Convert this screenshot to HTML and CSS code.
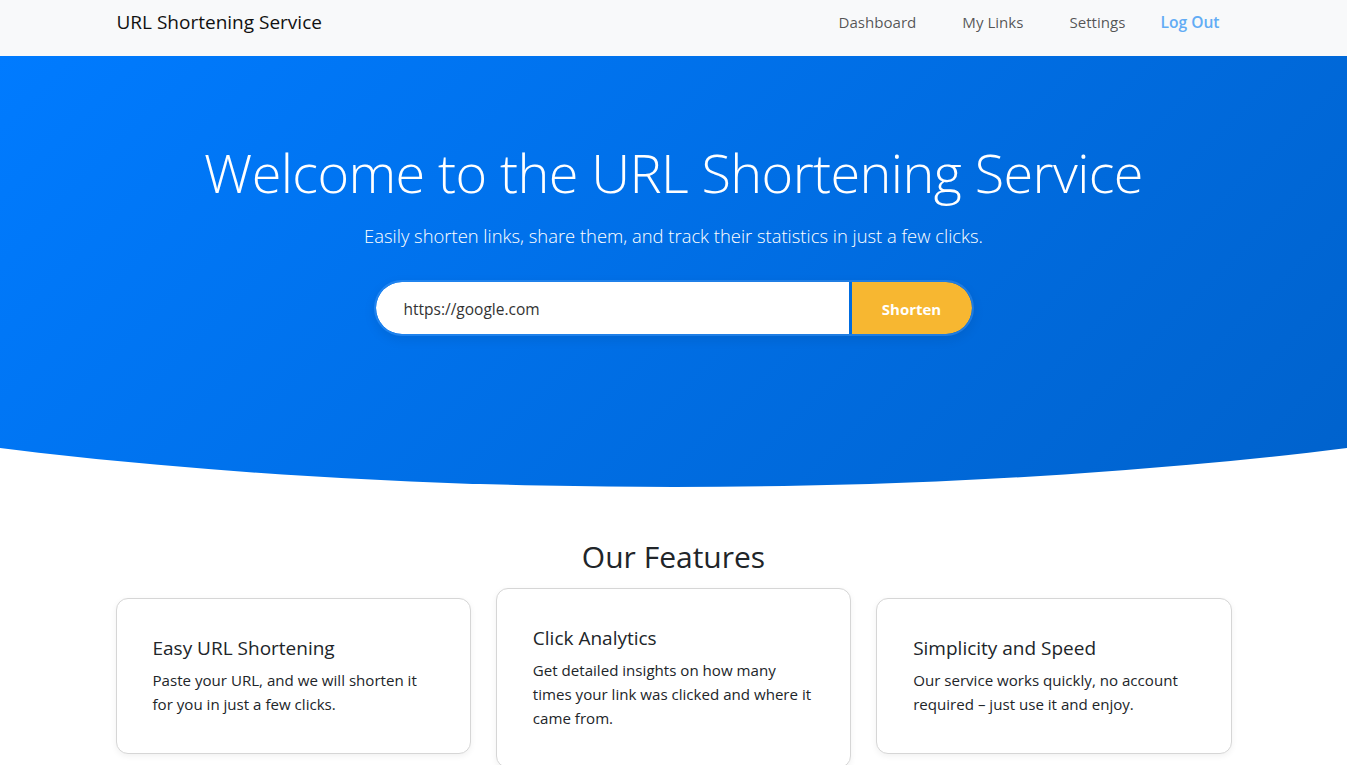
FILE: index.html
```html
<!DOCTYPE html>
<html lang="en">
<head>
<meta charset="utf-8">
<title>URL Shortening Service</title>
<link rel="stylesheet" href="styles.css">
</head>
<body>
<nav class="navbar">
  <div class="container nav-inner">
    <a class="brand" href="#">URL Shortening Service</a>
    <ul class="nav-links">
      <li><a class="nav-link" href="#">Dashboard</a></li>
      <li><a class="nav-link" href="#">My Links</a></li>
      <li><a class="nav-link" href="#">Settings</a></li>
      <li><a class="nav-link logout" href="#">Log Out</a></li>
    </ul>
  </div>
</nav>

<section class="hero">
  <h1 class="hero-title">Welcome to the URL Shortening Service</h1>
  <p class="hero-lead">Easily shorten links, share them, and track their statistics in just a few clicks.</p>
  <form class="shorten-form">
    <input class="url-input" type="text" value="https://google.com">
    <button class="shorten-btn" type="button">Shorten</button>
  </form>
</section>

<section class="features">
  <div class="container">
    <h2 class="features-title">Our Features</h2>
    <div class="feature-grid">
      <div class="card">
        <h3 class="card-title">Easy URL Shortening</h3>
        <p class="card-text">Paste your URL, and we will shorten it for you in just a few clicks.</p>
      </div>
      <div class="card card-raised">
        <h3 class="card-title">Click Analytics</h3>
        <p class="card-text">Get detailed insights on how many times your link was clicked and where it came from.</p>
      </div>
      <div class="card">
        <h3 class="card-title">Simplicity and Speed</h3>
        <p class="card-text">Our service works quickly, no account required – just use it and enjoy.</p>
      </div>
    </div>
  </div>
</section>
</body>
</html>
```
FILE: styles.css
```css
* { box-sizing: border-box; }

html, body {
  margin: 0;
  padding: 0;
}

body {
  font-family: "Open Sans", "Noto Sans", "Liberation Sans", sans-serif;
  color: #212529;
  background: #fff;
  overflow: hidden;
}

.container {
  width: 1116px;
  margin: 0 auto;
}

/* Navbar */
.navbar {
  background: #f8f9fa;
  height: 56px;
}

.nav-inner {
  height: 100%;
  display: flex;
  align-items: flex-start;
  justify-content: space-between;
  padding-top: 8px;
}

.brand {
  font-size: 19px;
  line-height: 28px;
  color: #111;
  text-decoration: none;
  padding-left: 1px;
}

.nav-links {
  list-style: none;
  margin: 0;
  padding: 0 12px 0 0;
  display: flex;
  align-items: center;
  height: 28px;
}

.nav-link {
  display: block;
  font-size: 15.1px;
  line-height: 28px;
  color: rgba(0, 0, 0, 0.68);
  text-decoration: none;
  margin-left: 46px;
}

.nav-links li:first-child .nav-link { margin-left: 0; }

.nav-link.logout {
  color: #62acf5;
  font-size: 15.6px;
  font-weight: 600;
  margin-left: 35px;
}

/* Hero */
.hero {
  background: linear-gradient(135deg, #007bff 0%, #0062cc 100%);
  clip-path: ellipse(100% 67.5% at 50% 32.5%);
  color: #fff;
  text-align: center;
  padding: 81px 0 151px;
}

.hero-title {
  margin: 0;
  font-size: 54px;
  font-weight: 300;
  line-height: 70px;
  letter-spacing: -0.6px;
}

.hero-lead {
  margin: 14px 0 0;
  font-size: 18.4px;
  font-weight: 300;
  line-height: 30px;
}

.shorten-form {
  width: 600px;
  height: 56px;
  margin: 29px auto 0;
  display: flex;
  gap: 3px;
  border-radius: 28px;
  border: 2px solid rgba(255, 255, 255, 0.12);
  box-shadow: 0 4px 12px rgba(0, 0, 0, 0.08);
  overflow: hidden;
}

.url-input {
  flex: 1;
  border: none;
  outline: none;
  background: #fff;
  border-radius: 27px 0 0 27px;
  padding: 2px 28px 0;
  font-family: inherit;
  font-size: 15.5px;
  color: #333;
}

.shorten-btn {
  width: 120px;
  border: none;
  background: #f7b731;
  color: #fff;
  font-family: inherit;
  font-size: 15px;
  font-weight: 700;
  border-radius: 0 27px 27px 0;
  padding-top: 2px;
  cursor: pointer;
}

/* Features */
.features {
  padding-top: 51px;
}

.features-title {
  margin: 0;
  text-align: center;
  font-size: 30px;
  font-weight: 400;
  line-height: 38px;
}

.feature-grid {
  margin-top: 22px;
  display: grid;
  grid-template-columns: repeat(3, 1fr);
  gap: 25px;
  align-items: start;
}

.card {
  background: #fff;
  border: 1px solid #d6d6d6;
  border-radius: 12px;
  padding: 36px 36px 37px;
  box-shadow: 0 2px 6px rgba(0, 0, 0, 0.06);
}

.card-raised {
  transform: translateY(-10px);
}

.card-title {
  margin: 0;
  font-size: 19px;
  font-weight: 400;
  line-height: 24px;
  padding-top: 1px;
}

.card-text {
  margin: 8px 0 0;
  font-size: 15.1px;
  line-height: 24px;
}
```
